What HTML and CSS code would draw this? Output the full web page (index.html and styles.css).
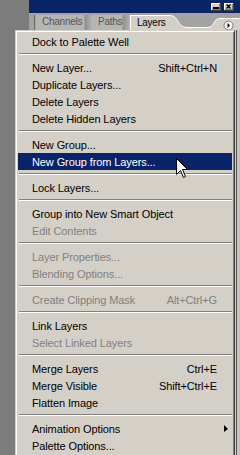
FILE: index.html
```html
<!DOCTYPE html>
<html>
<head>
<meta charset="utf-8">
<link rel="stylesheet" href="styles.css">
</head>
<body>
<div class="palette">
  <div class="titlebar">
    <svg class="tbtn" width="10" height="8" viewBox="0 0 10 8">
      <rect x="0" y="0" width="10" height="8" fill="#404040"/>
      <rect x="0" y="0" width="9" height="7" fill="#ffffff"/>
      <rect x="1" y="1" width="8" height="6" fill="#808080"/>
      <rect x="1" y="1" width="7" height="5" fill="#d4d0c8"/>
      <rect x="2" y="4" width="6" height="2" fill="#000"/>
    </svg>
    <svg class="tbtn" width="10" height="8" viewBox="0 0 10 8">
      <rect x="0" y="0" width="10" height="8" fill="#404040"/>
      <rect x="0" y="0" width="9" height="7" fill="#ffffff"/>
      <rect x="1" y="1" width="8" height="6" fill="#808080"/>
      <rect x="1" y="1" width="7" height="5" fill="#d4d0c8"/>
      <path d="M2.5 1.5 L6.5 5.5 M6.5 1.5 L2.5 5.5" stroke="#000" stroke-width="1.4"/>
    </svg>
  </div>
  <div class="tabs">
    <div class="grip"></div>
    <div class="tab tab-channels">Channels</div>
    <div class="tab tab-paths">Paths</div>
    <div class="tab active">Layers</div>
    <svg class="notch" width="50" height="17" viewBox="0 0 50 17">
      <path d="M0 2.5 C9 2.5 7 14.5 17 14.5 L37 14.5 C45 14.5 43 5.5 50 5.5 V17 H0 Z" fill="#d4d0c8"/>
      <path d="M0 2.5 C9 2.5 7 14.5 17 14.5 L37 14.5 C45 14.5 43 5.5 50 5.5" fill="none" stroke="#ffffff" stroke-width="1"/>
    </svg>
    <div class="rest">
      <svg class="menubtn" width="11" height="11" viewBox="0 0 11 11">
        <circle cx="5.5" cy="5.5" r="4.5" fill="#f4f4f4" stroke="#7a7a7a"/>
        <path d="M4.5 3 L7 5.5 L4.5 8 Z" fill="#000"/>
      </svg>
    </div>
  </div>
  <div class="body"><div class="frame"></div></div>
</div>

<div class="menu">
  <div class="item"><span class="label">Dock to Palette Well</span></div>
  <div class="sep"></div>
  <div class="item"><span class="label">New Layer...</span><span class="key">Shift+Ctrl+N</span></div>
  <div class="item"><span class="label">Duplicate Layers...</span></div>
  <div class="item"><span class="label">Delete Layers</span></div>
  <div class="item"><span class="label">Delete Hidden Layers</span></div>
  <div class="sep"></div>
  <div class="item"><span class="label">New Group...</span></div>
  <div class="item hl"><span class="label">New Group from Layers...</span></div>
  <div class="sep"></div>
  <div class="item"><span class="label">Lock Layers...</span></div>
  <div class="sep"></div>
  <div class="item"><span class="label">Group into New Smart Object</span></div>
  <div class="item dis"><span class="label">Edit Contents</span></div>
  <div class="sep"></div>
  <div class="item dis"><span class="label">Layer Properties...</span></div>
  <div class="item dis"><span class="label">Blending Options...</span></div>
  <div class="sep"></div>
  <div class="item dis"><span class="label">Create Clipping Mask</span><span class="key">Alt+Ctrl+G</span></div>
  <div class="sep"></div>
  <div class="item"><span class="label">Link Layers</span></div>
  <div class="item dis"><span class="label">Select Linked Layers</span></div>
  <div class="sep"></div>
  <div class="item"><span class="label">Merge Layers</span><span class="key">Ctrl+E</span></div>
  <div class="item"><span class="label">Merge Visible</span><span class="key">Shift+Ctrl+E</span></div>
  <div class="item"><span class="label">Flatten Image</span></div>
  <div class="sep"></div>
  <div class="item"><span class="label">Animation Options</span><span class="sub"></span></div>
  <div class="item"><span class="label">Palette Options...</span></div>
</div>

<svg class="cursor" width="13" height="20" viewBox="0 0 13 20">
  <path d="M0.5 0.5 L0.5 16.5 L4.5 12.5 L7.5 19.5 L9.5 18.5 L6.5 11.5 L11.5 11.5 Z" fill="#fff" stroke="#000" stroke-width="1" stroke-linejoin="miter"/>
</svg>
</body>
</html>
```
FILE: styles.css
```css
html, body {
  margin: 0;
  padding: 0;
}
body {
  width: 240px;
  height: 455px;
  overflow: hidden;
  background: #7c7c7c;
  position: relative;
  font-family: "Liberation Sans", Arial, sans-serif;
}
.palette {
  margin-left: 29px;
  width: 211px;
  height: 455px;
  display: flex;
  flex-direction: column;
  background: #d4d0c8;
}
.titlebar {
  height: 13px;
  box-sizing: border-box;
  background: #0a246a;
  display: flex;
  justify-content: flex-end;
  align-items: flex-start;
  gap: 3px;
  padding: 3px 6px 0 0;
}
.tbtn {
  display: block;
}
.tabs {
  height: 17px;
  background: #a3a3a3;
  display: flex;
  align-items: flex-end;
}
.grip {
  width: 5px;
  height: 15px;
  border-right: 1px solid #6c6c6c;
  margin-right: 1px;
  align-self: flex-end;
}
.tab {
  height: 15px;
  box-sizing: border-box;
  font-size: 10px;
  letter-spacing: -0.25px;
  line-height: 14px;
  color: #555;
  position: relative;
}
.tab-channels {
  width: 56px;
  padding-left: 6px;
  background: linear-gradient(to right, #b5b5b5 0, #b5b5b5 48px, #8e8e8e 49px, #b5b5b5 56px);
}
.tab-paths {
  width: 38px;
  padding-left: 6px;
  background: linear-gradient(to right, #b5b5b5 0, #b5b5b5 30px, #8e8e8e 31px, #b5b5b5 38px);
}
.tab.active {
  width: 40px;
  padding-left: 6px;
  background: #d4d0c8;
  border-top: 1px solid #fff;
  border-left: 1px solid #fff;
  color: #000;
}
.notch {
  display: block;
  flex: none;
}
.rest {
  flex: 1;
  height: 12px;
  box-sizing: border-box;
  background: #d4d0c8;
  border-top: 1px solid #fff;
  display: flex;
  align-items: flex-start;
  padding: 1px 0 0 3px;
}
.menubtn {
  display: block;
}
.body {
  flex: 1;
  display: flex;
  justify-content: flex-end;
}
.frame {
  width: 3px;
  border-left: 1px solid #555;
  background: #c8c4bc;
}
.menu {
  position: absolute;
  left: 15px;
  top: 30px;
  width: 220px;
  height: 440px;
  box-sizing: border-box;
  background: #d4d0c8;
  border: 1px solid;
  border-color: #d4d0c8 #404040 #404040 #d4d0c8;
  box-shadow: inset 1px 1px 0 #fff, inset -1px -1px 0 #808080;
  padding: 2px 2px 2px 2px;
  font-size: 11px;
  letter-spacing: -0.1px;
  color: #000;
}
.item {
  height: 17px;
  display: flex;
  align-items: center;
  padding: 0 4px 0 14px;
  white-space: nowrap;
}
.label {
  flex: 1;
}
.key {
  margin-right: 11px;
}
.item.hl {
  background: #0a246a;
  color: #fff;
}
.item.dis {
  color: #808080;
}
.sub {
  width: 0;
  height: 0;
  border-left: 4px solid #000;
  border-top: 4px solid transparent;
  border-bottom: 3px solid transparent;
}
.sep {
  height: 9px;
  box-sizing: border-box;
  padding-top: 3px;
}
.sep::before {
  content: "";
  display: block;
  border-top: 1px solid #808080;
  border-bottom: 1px solid #fff;
  margin-left: 1px;
}
.cursor {
  position: absolute;
  left: 176px;
  top: 158px;
  display: block;
}
```
